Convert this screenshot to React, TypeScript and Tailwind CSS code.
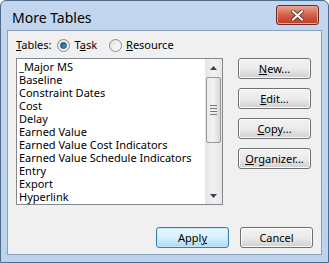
import React from 'react';

const items = [
  '_Major MS',
  'Baseline',
  'Constraint Dates',
  'Cost',
  'Delay',
  'Earned Value',
  'Earned Value Cost Indicators',
  'Earned Value Schedule Indicators',
  'Entry',
  'Export',
  'Hyperlink',
];

function Radio({ checked }: { checked?: boolean }) {
  return (
    <span className="w-[13px] h-[13px] rounded-full border border-[#8a8a8a] bg-gradient-to-br from-[#e4e4e4] to-[#fbfbfb] flex items-center justify-center">
      {checked && (
        <span className="w-[7px] h-[7px] rounded-full bg-gradient-to-br from-[#1d5a8c] to-[#4aa2dc] border border-[#16466e]" />
      )}
    </span>
  );
}

function Btn({ children, primary }: { children: React.ReactNode; primary?: boolean }) {
  return (
    <button
      className={
        'w-[73px] h-[21px] rounded-[3px] border text-[11px] leading-none text-black flex items-center justify-center ' +
        (primary
          ? 'border-[#3c7fb1] bg-gradient-to-b from-[#eaf6fd] via-[#d9f0fc] to-[#a7d9f5] shadow-[inset_0_0_0_1px_#c4e5f6]'
          : 'border-[#707070] bg-gradient-to-b from-[#f2f2f2] via-[#ebebeb] to-[#cfcfcf] shadow-[inset_0_0_0_1px_#fcfcfc]')
      }
    >
      {children}
    </button>
  );
}

export default function App() {
  return (
    <div
      className="w-[329px] h-[263px] flex flex-col bg-gradient-to-b from-[#c2d6ee] to-[#bdd3ec] border border-[#4e6a8c] rounded-t-[6px] px-[6px] pb-[7px] text-black"
      style={{ fontFamily: '"Noto Sans", "Open Sans", sans-serif' }}
    >
      <div className="h-[29px] flex items-start justify-between">
        <span className="text-[14px] mt-[6px] ml-[5px] text-black">More Tables</span>
        <div className="mt-[4px] mr-[3px] w-[43px] h-[20px] rounded-[3px] border border-[#6b2a24] bg-gradient-to-b from-[#e8a493] via-[#d0614b] to-[#c03a26] flex items-center justify-center shadow-[inset_0_0_0_1px_#eba597]">
          <svg width="13" height="11" viewBox="0 0 13 11">
            <path d="M2 1.5 L11 9.5 M11 1.5 L2 9.5" stroke="#5a1a10" strokeWidth="3.6" strokeLinecap="square" />
            <path d="M2 1.5 L11 9.5 M11 1.5 L2 9.5" stroke="#ffffff" strokeWidth="2.2" strokeLinecap="square" />
          </svg>
        </div>
      </div>

      <div className="flex-1 flex flex-col bg-[#f0f0f0] border border-[#8aa1bc] px-[8px] pt-[6px] pb-[6px] text-[11px]">
        <div className="h-[16px] flex items-center">
          <span>
            <span className="underline">T</span>ables:
          </span>
          <span className="ml-[6px] flex items-center gap-[4px]">
            <Radio checked />
            <span>
              T<span className="underline">a</span>sk
            </span>
          </span>
          <span className="ml-[12px] flex items-center gap-[4px]">
            <Radio />
            <span>
              <span className="underline">R</span>esource
            </span>
          </span>
        </div>

        <div className="flex mt-[5px]">
          <div className="w-[207px] h-[147px] border border-[#828790] bg-white flex">
            <div className="flex-1 pt-[1px] pl-[2px] leading-[13px]">
              {items.map((t) => (
                <div key={t} className="h-[13px] whitespace-nowrap">
                  {t}
                </div>
              ))}
            </div>
            <div className="w-[17px] bg-gradient-to-r from-[#e6e6e6] via-[#f2f2f2] to-[#e6e6e6] flex flex-col items-center">
              <div className="h-[17px] flex items-center justify-center">
                <svg width="7" height="4" viewBox="0 0 7 4">
                  <path d="M0 4 L3.5 0 L7 4 Z" fill="#404040" />
                </svg>
              </div>
              <div className="w-[15px] h-[66px] mt-[1px] rounded-[2px] border border-[#979797] bg-gradient-to-r from-[#ececec] via-[#f2f2f2] to-[#d6d6d6] flex flex-col items-center justify-center gap-[2px]">
                <span className="w-[7px] h-[1px] bg-[#7a7a7a]" />
                <span className="w-[7px] h-[1px] bg-[#7a7a7a]" />
                <span className="w-[7px] h-[1px] bg-[#7a7a7a]" />
                <span className="w-[7px] h-[1px] bg-[#7a7a7a]" />
              </div>
              <div className="flex-1" />
              <div className="h-[17px] flex items-center justify-center">
                <svg width="7" height="4" viewBox="0 0 7 4">
                  <path d="M0 0 L7 0 L3.5 4 Z" fill="#404040" />
                </svg>
              </div>
            </div>
          </div>

          <div className="ml-[15px] flex flex-col gap-[9px]">
            <Btn>
              <span className="underline">N</span>ew...
            </Btn>
            <Btn>
              <span className="underline">E</span>dit...
            </Btn>
            <Btn>
              <span className="underline">C</span>opy...
            </Btn>
            <Btn>
              <span className="underline">O</span>rganizer...
            </Btn>
          </div>
        </div>

        <div className="mt-auto flex justify-end gap-[11px]">
          <Btn primary>
            Appl<span className="underline">y</span>
          </Btn>
          <Btn>Cancel</Btn>
        </div>
      </div>
    </div>
  );
}
